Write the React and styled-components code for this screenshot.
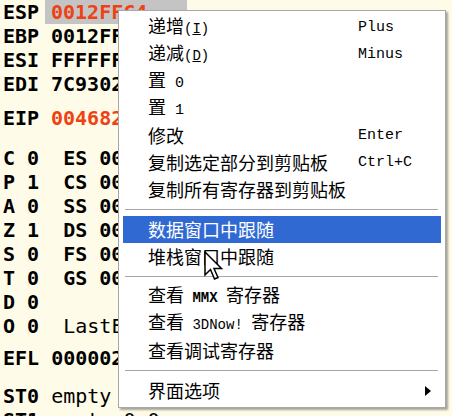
import styled, { createGlobalStyle } from "styled-components";

const GlobalStyle = createGlobalStyle`
  html, body {
    margin: 0;
    padding: 0;
    background: #fefbe8;
  }
  #root {
    width: 452px;
    height: 416px;
    overflow: hidden;
  }
`;

// 寄存器面板
const Pane = styled.div`
  position: relative;
  width: 452px;
  height: 416px;
  background: #fefbe8;
  font-family: "DejaVu Sans Mono", "Liberation Mono", monospace;
  font-size: 20px;
  color: #000;
  padding-left: 3px;
  box-sizing: border-box;
  overflow: hidden;
`;

const Row = styled.div`
  display: flex;
  height: 24px;
  line-height: 24px;
  white-space: pre;
  margin-top: ${(p) => p.$gap || 0}px;
  font-weight: bold;
`;

const Name = styled.span`
  width: 36px;
`;

const Value = styled.span`
  margin-left: 6px;
  padding-left: 6px;
  padding-right: 40px;
  color: ${(p) => (p.$red ? "#ee4214" : "#000")};
  background: ${(p) => (p.$selected ? "#c4c4c4" : "transparent")};
`;

const Cell = styled.span`
  font-weight: ${(p) => (p.$light ? "normal" : "bold")};
`;

// 右键菜单
const Menu = styled.div`
  position: absolute;
  left: 118px;
  top: 10px;
  width: 328px;
  box-sizing: border-box;
  padding: 3px 4px 3px 4px;
  background: #fff;
  border: 1px solid #a8a8a8;
  box-shadow: 2px 2px 2px rgba(0, 0, 0, 0.35);
  font-family: "Noto Sans CJK SC", "Noto Sans", sans-serif;
  font-size: 18px;
`;

const Item = styled.div`
  display: flex;
  align-items: center;
  height: 27px;
  padding-left: 25px;
  color: ${(p) => (p.$active ? "#fff" : "#000")};
  background: ${(p) => (p.$active ? "#3169d2" : "transparent")};
  white-space: pre;
`;

const Label = styled.span`
  display: inline-block;
  width: ${(p) => (p.$wide ? "210px" : "auto")};
  line-height: 27px;
`;

const Mono = styled.span`
  font-family: "Liberation Mono", "DejaVu Sans Mono", monospace;
  font-size: ${(p) => p.$size || 14}px;
  font-weight: ${(p) => (p.$bold ? "bold" : "normal")};
`;

const Key = styled.span`
  text-decoration: underline;
`;

const Shortcut = styled.span`
  font-family: "Liberation Mono", "DejaVu Sans Mono", monospace;
  font-size: 15px;
`;

const Arrow = styled.span`
  margin-left: auto;
  margin-right: 10px;
  width: 0;
  height: 0;
  border-top: 5px solid transparent;
  border-bottom: 5px solid transparent;
  border-left: 6px solid #000;
`;

const Separator = styled.div`
  height: 13px;
  display: flex;
  align-items: center;
  padding: 0 3px 0 2px;
  &::after {
    content: "";
    flex: 1;
    height: 1px;
    background: #a6a6a6;
  }
`;

const Cursor = styled.svg`
  position: absolute;
  left: 204px;
  top: 251px;
`;

const regs = [
  { name: "ESP", value: "0012FFC4", red: true, selected: true },
  { name: "EBP", value: "0012FFF0" },
  { name: "ESI", value: "FFFFFFFF" },
  { name: "EDI", value: "7C930208" },
  { name: "EIP", value: "00468280", red: true, gap: 10 },
];

const flags = [
  ["C", "0", "ES", "0023 32bit 0(FFFFFFFF)", 16],
  ["P", "1", "CS", "001B 32bit 0(FFFFFFFF)"],
  ["A", "0", "SS", "0023 32bit 0(FFFFFFFF)"],
  ["Z", "1", "DS", "0023 32bit 0(FFFFFFFF)"],
  ["S", "0", "FS", "003B 32bit 7FFDF000(FFF)"],
  ["T", "0", "GS", "0000 NULL"],
  ["D", "0", "", ""],
];

const App = () => {
  return (
    <>
      <GlobalStyle />
      <Pane>
        {regs.map((r) => (
          <Row key={r.name} $gap={r.gap}>
            <Name>{r.name}</Name>
            <Value $red={r.red} $selected={r.selected}>
              {r.value}
            </Value>
          </Row>
        ))}
        {flags.map(([f, v, seg, segVal, gap]) => (
          <Row key={f} $gap={gap}>
            <Cell>{`${f} ${v}  ${seg} ${segVal}`}</Cell>
          </Row>
        ))}
        <Row>
          <Cell>{"O 0  "}</Cell>
          <Cell $light>LastErr ERROR_SUCCESS (00000000)</Cell>
        </Row>
        <Row $gap={8}>
          <Cell>EFL 00000246 (NO,NB,E,BE,NS,PE,GE,LE)</Cell>
        </Row>
        <Row $gap={14}>
          <Cell>{"ST0 "}</Cell>
          <Cell $light>empty 0.0</Cell>
        </Row>
        <Row>
          <Cell>{"ST1 "}</Cell>
          <Cell $light>empty 0.0</Cell>
        </Row>

        <Menu>
          <Item>
            <Label $wide>
              递增<Mono>(<Key>I</Key>)</Mono>
            </Label>
            <Shortcut>Plus</Shortcut>
          </Item>
          <Item>
            <Label $wide>
              递减<Mono>(<Key>D</Key>)</Mono>
            </Label>
            <Shortcut>Minus</Shortcut>
          </Item>
          <Item>
            <Label>
              置<Mono $size={15}> 0</Mono>
            </Label>
          </Item>
          <Item>
            <Label>
              置<Mono $size={15}> 1</Mono>
            </Label>
          </Item>
          <Item>
            <Label $wide>修改</Label>
            <Shortcut>Enter</Shortcut>
          </Item>
          <Item>
            <Label $wide>复制选定部分到剪贴板</Label>
            <Shortcut>Ctrl+C</Shortcut>
          </Item>
          <Item>
            <Label>复制所有寄存器到剪贴板</Label>
          </Item>
          <Separator />
          <Item $active>
            <Label>数据窗口中跟随</Label>
          </Item>
          <Item>
            <Label>堆栈窗口中跟随</Label>
          </Item>
          <Separator />
          <Item>
            <Label>
              查看<Mono $bold> MMX </Mono>寄存器
            </Label>
          </Item>
          <Item>
            <Label>
              查看<Mono> 3DNow! </Mono>寄存器
            </Label>
          </Item>
          <Item>
            <Label>查看调试寄存器</Label>
          </Item>
          <Separator />
          <Item>
            <Label>界面选项</Label>
            <Arrow />
          </Item>
        </Menu>

        <Cursor width="22" height="32" viewBox="0 0 22 32">
          <path
            d="M1 1 L1 24 L6.5 18.5 L10.5 28 L14 26.5 L10 17.5 L17.5 17.5 Z"
            fill="#fff"
            stroke="#000"
            strokeWidth="1.5"
            strokeLinejoin="miter"
          />
        </Cursor>
      </Pane>
    </>
  );
};

export default App;
